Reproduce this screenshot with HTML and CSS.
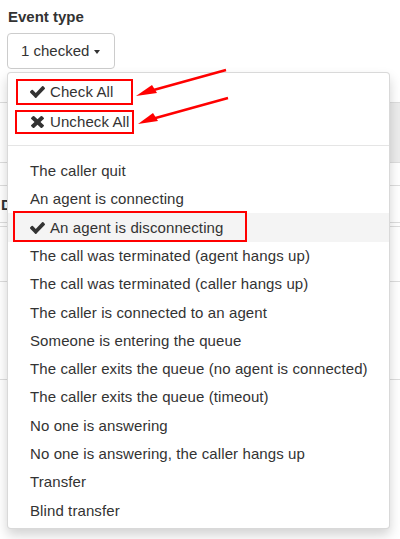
FILE: index.html
```html
<!DOCTYPE html>
<html>
<head>
<meta charset="utf-8">
<link rel="stylesheet" href="styles.css">
</head>
<body>
<div class="page">
  <div class="form-group">
    <label class="control-label">Event type</label>
    <div class="btn-group">
      <button class="btn" type="button"><span class="sel-text">1 checked</span><b class="caret"></b></button>
      <ul class="menu">
        <li class="util"><svg class="ico-check" viewBox="121 334 1550 1188" preserveAspectRatio="none"><path d="M1671 566q0 40-28 68l-724 724-136 136q-28 28-68 28t-68-28l-136-136-362-362q-28-28-28-68t28-68l136-136q28-28 68-28t68 28l294 295 656-657q28-28 68-28t68 28l136 136q28 28 28 68z"/></svg>Check All</li>
        <li class="util"><svg class="ico-times" viewBox="110 366 1188 1188" preserveAspectRatio="none"><path d="M1298 1322q0 40-28 68l-136 136q-28 28-68 28t-68-28l-294-294-294 294q-28 28-68 28t-68-28l-136-136q-28-28-28-68t28-68l294-294-294-294q-28-28-28-68t28-68l136-136q28-28 68-28t68 28l294 294 294-294q28-28 68-28t68 28l136 136q28 28 28 68t-28 68l-294 294 294 294q28 28 28 68z"/></svg>Uncheck All</li>
        <li class="divider"></li>
        <li class="opt">The caller quit</li>
        <li class="opt">An agent is connecting</li>
        <li class="opt active"><svg class="ico-check" viewBox="121 334 1550 1188" preserveAspectRatio="none"><path d="M1671 566q0 40-28 68l-724 724-136 136q-28 28-68 28t-68-28l-136-136-362-362q-28-28-28-68t28-68l136-136q28-28 68-28t68 28l294 295 656-657q28-28 68-28t68 28l136 136q28 28 28 68z"/></svg>An agent is disconnecting</li>
        <li class="opt">The call was terminated (agent hangs up)</li>
        <li class="opt">The call was terminated (caller hangs up)</li>
        <li class="opt">The caller is connected to an agent</li>
        <li class="opt">Someone is entering the queue</li>
        <li class="opt">The caller exits the queue (no agent is connected)</li>
        <li class="opt">The caller exits the queue (timeout)</li>
        <li class="opt">No one is answering</li>
        <li class="opt">No one is answering, the caller hangs up</li>
        <li class="opt">Transfer</li>
        <li class="opt">Blind transfer</li>
      </ul>
    </div>
  </div>

  <div class="bg">
    <div class="bg-row1"><div class="green-mark"></div><div class="grey-block"></div></div>
    <div class="bg-row2"></div>
    <div class="bg-label">D</div>
    <div class="bg-input"></div>
    <div class="bg-rule r1"></div>
    <div class="bg-rule r2"></div>
  </div>

  <svg class="annot" viewBox="0 0 400 539" width="400" height="539">
    <rect x="17" y="80" width="115" height="24" fill="none" stroke="#f00" stroke-width="2"/>
    <rect x="16" y="111" width="117" height="22" fill="none" stroke="#f00" stroke-width="2"/>
    <rect x="14" y="212" width="232" height="29" fill="none" stroke="#f00" stroke-width="2"/>
    <line x1="226" y1="70" x2="150" y2="91" stroke="#f00" stroke-width="2.4"/>
    <polygon points="136,96 152,85 157,93" fill="#f00"/>
    <line x1="228" y1="98" x2="152" y2="119" stroke="#f00" stroke-width="2.4"/>
    <polygon points="138,124 153,113 158,121" fill="#f00"/>
  </svg>
</div>
</body>
</html>
```

FILE: styles.css
```css
* { box-sizing: border-box; }
html, body { margin: 0; padding: 0; background: #fff; }
body {
  font-family: "Liberation Sans", Arial, sans-serif;
  font-size: 15px;
  line-height: 20px;
  color: #333;
  overflow: hidden;
  height: 539px;
}
.page {
  position: relative;
  padding: 6.5px 8px 0 8px;
  height: 539px;
}
.control-label {
  display: block;
  font-weight: 700;
  margin-bottom: 6.5px;
}
.btn-group {
  position: relative;
  display: inline-block;
  margin-left: -1px;
}
.btn {
  font-family: inherit;
  font-size: 15px;
  line-height: 20px;
  color: #333;
  background: #fff;
  border: 1px solid #ccc;
  border-radius: 4px;
  padding: 7px 14px 7px 13px;
  height: 36px;
  display: inline-flex;
  align-items: center;
}
.caret {
  display: inline-block;
  width: 0;
  height: 0;
  margin-left: 5px;
  margin-top: 2px;
  border-top: 4px solid #333;
  border-left: 3.5px solid transparent;
  border-right: 3.5px solid transparent;
}
.menu {
  position: absolute;
  top: 39px;
  left: 0;
  z-index: 10;
  width: 383px;
  margin: 0;
  padding: 4px 0 3px 0;
  list-style: none;
  background: #fff;
  border: 1px solid rgba(0,0,0,.15);
  border-radius: 4px;
  box-shadow: 0 6px 12px rgba(0,0,0,.175);
  letter-spacing: 0.1px;
}
.menu li { white-space: nowrap; }
.util {
  height: 30px;
  display: flex;
  align-items: center;
  padding-left: 22px;
}
.opt {
  height: 28.32px;
  display: flex;
  align-items: center;
  padding-left: 22px;
}
.opt.active { background: #f4f4f4; }
.divider {
  height: 1px;
  background: #e5e5e5;
  margin: 8px 0 10.8px 0;
}
.ico-check {
  width: 15px;
  height: 12px;
  margin-right: 5px;
  fill: #333;
  flex: none;
}
.ico-times {
  width: 13px;
  height: 12px;
  margin-left: 1px;
  margin-right: 6px;
  fill: #333;
  flex: none;
}
.bg {
  margin: 33px -8px 0 -8px;
}
.bg-row1 {
  height: 61px;
  border-top: 1px solid #ddd;
  border-bottom: 1px solid #ddd;
  display: flex;
  justify-content: space-between;
  align-items: flex-start;
}
.green-mark {
  width: 1px;
  height: 23px;
  margin: 14px 0 0 7px;
  background: #5cb85c;
}
.grey-block {
  width: 40px;
  height: 59px;
  background: #ececec;
}
.bg-row2 {
  height: 23px;
  border-bottom: 1px solid #ddd;
}
.bg-label {
  font-weight: 700;
  margin: 9px 0 0 1px;
  height: 20px;
}
.bg-input {
  margin-top: 7px;
  height: 5px;
  border-top: 1px solid #ddd;
  border-bottom: 1px solid #ddd;
}
.bg-rule {
  border-top: 1px solid #ddd;
}
.bg-rule.r1 { margin-top: 54px; height: 98px; }
.annot {
  position: absolute;
  top: 0;
  left: 0;
  z-index: 20;
  pointer-events: none;
}
```
